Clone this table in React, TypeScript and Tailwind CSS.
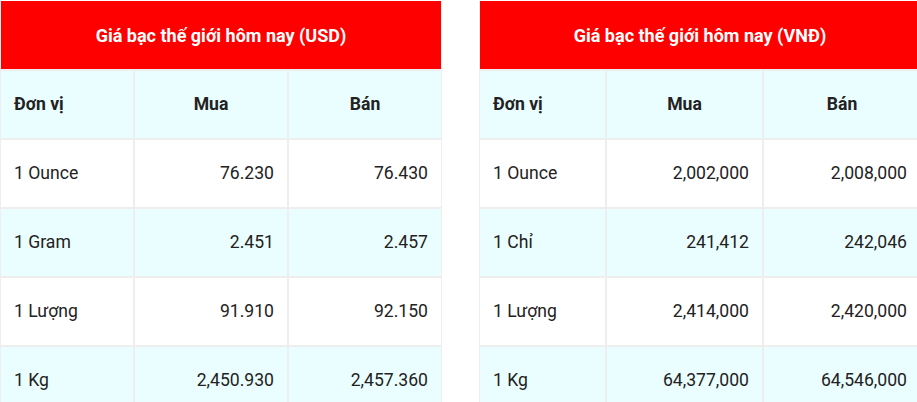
const usd = [
  ["1 Ounce", "76.230", "76.430"],
  ["1 Gram", "2.451", "2.457"],
  ["1 Lượng", "91.910", "92.150"],
  ["1 Kg", "2,450.930", "2,457.360"],
];

const vnd = [
  ["1 Ounce", "2,002,000", "2,008,000"],
  ["1 Chỉ", "241,412", "242,046"],
  ["1 Lượng", "2,414,000", "2,420,000"],
  ["1 Kg", "64,377,000", "64,546,000"],
];

type TableProps = {
  title: string;
  rows: string[][];
  cols: string;
};

const PriceTable = ({ title, rows, cols }: TableProps) => (
  <div className={`grid ${cols} gap-[2px] bg-[#eeeeee] border-x border-[#eeeeee] shrink-0`}>
    <div className="col-span-3 h-[68px] bg-[#ff0000] flex items-center justify-center text-white font-bold text-[18px]">
      {title}
    </div>
    <div className="h-[67px] bg-[#ebfeff] flex items-center px-[13px] font-bold">Đơn vị</div>
    <div className="h-[67px] bg-[#ebfeff] flex items-center justify-center font-bold">Mua</div>
    <div className="h-[67px] bg-[#ebfeff] flex items-center justify-center font-bold">Bán</div>
    {rows.map((r, i) => {
      const bg = i % 2 === 1 ? "bg-[#ebfeff]" : "bg-white";
      return [
        <div key={`${i}a`} className={`h-[67px] ${bg} flex items-center px-[13px]`}>{r[0]}</div>,
        <div key={`${i}b`} className={`h-[67px] ${bg} flex items-center justify-end px-[13px]`}>{r[1]}</div>,
        <div key={`${i}c`} className={`h-[67px] ${bg} flex items-center justify-end px-[13px]`}>{r[2]}</div>,
      ];
    })}
  </div>
);

export default function App() {
  return (
    <div className="w-[917px] h-[402px] overflow-hidden bg-white pt-[1px] font-['Roboto',sans-serif] text-[17.6px] text-[#222]">
      <div className="flex gap-[37px]">
        <PriceTable title="Giá bạc thế giới hôm nay (USD)" rows={usd} cols="grid-cols-[132px_152px_152px]" />
        <PriceTable title="Giá bạc thế giới hôm nay (VNĐ)" rows={vnd} cols="grid-cols-[125px_155px_156px]" />
      </div>
    </div>
  );
}
